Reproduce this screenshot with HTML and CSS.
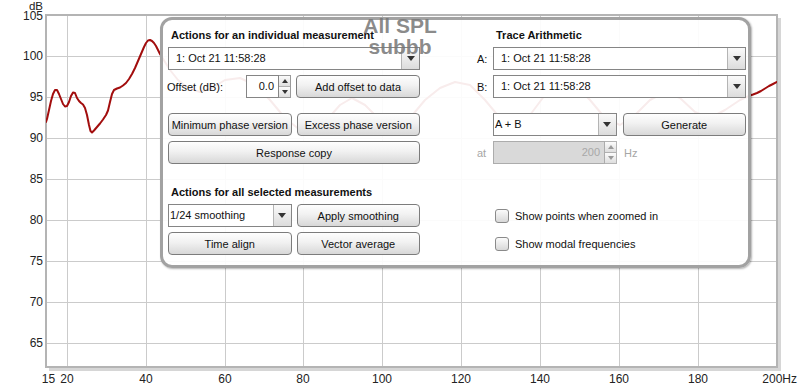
FILE: index.html
```html
<!DOCTYPE html>
<html lang="en">
<head>
    <meta charset="UTF-8">
    <meta name="viewport" content="width=device-width, initial-scale=1.0">
    <link rel="stylesheet" href="styles.css">
    <title>All SPL</title>
</head>
<body>

    <div class="graph">
        <svg class="plot" width="800" height="389" viewBox="0 0 800 389">
            <defs>
                <clipPath id="plot-area">
                    <rect x="46" y="15" width="731" height="352"/>
                </clipPath>
            </defs>

            <!-- shadow + frame -->
            <path d="M779.5 18 V369.5 H49" fill="none" stroke="#d6d6d6" stroke-width="3"/>
            <rect x="46" y="15" width="731" height="352" fill="#fff" stroke="#b4b4b4" stroke-width="2"/>

            <g class="grid">
                <line x1="67" y1="16" x2="67" y2="366"/>
                <line x1="146" y1="16" x2="146" y2="366"/>
                <line x1="225" y1="16" x2="225" y2="366"/>
                <line x1="303" y1="16" x2="303" y2="366"/>
                <line x1="382" y1="16" x2="382" y2="366"/>
                <line x1="461" y1="16" x2="461" y2="366"/>
                <line x1="540" y1="16" x2="540" y2="366"/>
                <line x1="619" y1="16" x2="619" y2="366"/>
                <line x1="698" y1="16" x2="698" y2="366"/>
                <line x1="47" y1="56" x2="776" y2="56"/>
                <line x1="47" y1="97" x2="776" y2="97"/>
                <line x1="47" y1="138" x2="776" y2="138"/>
                <line x1="47" y1="179" x2="776" y2="179"/>
                <line x1="47" y1="220" x2="776" y2="220"/>
                <line x1="47" y1="261" x2="776" y2="261"/>
                <line x1="47" y1="302" x2="776" y2="302"/>
                <line x1="47" y1="343" x2="776" y2="343"/>
            </g>

            <path class="trace" clip-path="url(#plot-area)" d="M46 122 L47 119 L49 110 L51 101 L53 94 L55 90 L57 90 L59 94 L61 99 L63 104 L65 106.5 L67 106 L69 102 L71 96 L73 92.5 L75 93 L77 98 L79 101 L81 103 L83 104.5 L85 108 L87 115 L89 125 L90.5 131 L92 132.5 L94 130.5 L97 127 L100 123.5 L103 119.5 L106 115 L108 110.5 L110 102 L112 94 L114 90 L117 88.5 L120 87.5 L123 85.5 L126 83 L129 79 L132 74 L135 68 L138 61 L141 54 L144 47 L146 43 L148 40.5 L150 40 L152 41 L154 43 L156 46 L158 50 L160 54 L165 62 L170 70 L178 80 L188 88 L200 92 L212 88 L225 80 L240 78 L255 85 L270 100 L285 118 L300 130 L312 132 L325 122 L340 105 L352 98 L365 105 L380 120 L395 128 L410 118 L425 100 L440 88 L455 82 L470 85 L485 100 L500 118 L515 125 L530 115 L545 95 L560 82 L575 85 L590 100 L605 118 L620 125 L635 115 L650 100 L665 92 L680 98 L695 112 L710 118 L725 110 L740 100 L750 95.5 L753 94.5 L757 93 L761 91 L765 88.5 L769 86 L773 84 L777 82 L780 81"/>

            <g class="axis-y">
                <text x="43" y="10" class="axis-unit">dB</text>
                <text x="43" y="20">105</text>
                <text x="43" y="60">100</text>
                <text x="43" y="101">95</text>
                <text x="43" y="142">90</text>
                <text x="43" y="183">85</text>
                <text x="43" y="224">80</text>
                <text x="43" y="265">75</text>
                <text x="43" y="306">70</text>
                <text x="43" y="347">65</text>
            </g>
            <g class="axis-x">
                <text x="48.5" y="383">15</text>
                <text x="67" y="383">20</text>
                <text x="146" y="383">40</text>
                <text x="225" y="383">60</text>
                <text x="303" y="383">80</text>
                <text x="382" y="383">100</text>
                <text x="461" y="383">120</text>
                <text x="540" y="383">140</text>
                <text x="619" y="383">160</text>
                <text x="698" y="383">180</text>
                <text x="797" y="383" class="axis-end">200Hz</text>
            </g>
        </svg>

        <div class="panel">
            <div class="panel-col panel-left">
                <div class="section-title">Actions for an individual measurement</div>
                <div class="combo">
                    <span class="combo-text">1: Oct 21 11:58:28</span>
                    <span class="combo-arrow"></span>
                </div>
                <div class="offset-row gap-big">
                    <span class="offset-label">Offset (dB):</span>
                    <div class="spinner offset-spinner">
                        <span class="spinner-value">0.0</span>
                        <span class="spinner-arrows">
                            <span class="spin spin-up"></span>
                            <span class="spin spin-down"></span>
                        </span>
                    </div>
                    <button class="btn">Add offset to data</button>
                </div>
                <div class="pair">
                    <button class="btn">Minimum phase version</button>
                    <button class="btn">Excess phase version</button>
                </div>
                <button class="btn btn-wide">Response copy</button>

                <div class="section-title section-title-lower">Actions for all selected measurements</div>
                <div class="pair">
                    <div class="combo combo-edit">
                        <span class="combo-text">1/24 smoothing</span>
                        <span class="combo-arrow"></span>
                    </div>
                    <button class="btn">Apply smoothing</button>
                </div>
                <div class="pair">
                    <button class="btn">Time align</button>
                    <button class="btn">Vector average</button>
                </div>
            </div>

            <div class="panel-col panel-right">
                <div class="section-title trace-title">Trace Arithmetic</div>
                <div class="labelled">
                    <span class="row-label">A:</span>
                    <div class="combo">
                        <span class="combo-text">1: Oct 21 11:58:28</span>
                        <span class="combo-arrow"></span>
                    </div>
                </div>
                <div class="labelled gap-big">
                    <span class="row-label">B:</span>
                    <div class="combo">
                        <span class="combo-text">1: Oct 21 11:58:28</span>
                        <span class="combo-arrow"></span>
                    </div>
                </div>
                <div class="labelled">
                    <span class="row-label"></span>
                    <div class="pair pair-wide">
                        <div class="combo combo-edit">
                            <span class="combo-text">A + B</span>
                            <span class="combo-arrow"></span>
                        </div>
                        <button class="btn">Generate</button>
                    </div>
                </div>
                <div class="labelled at-row">
                    <span class="row-label disabled">at</span>
                    <div class="spinner spinner-disabled">
                        <span class="spinner-value">200</span>
                        <span class="spinner-arrows">
                            <span class="spin spin-up"></span>
                            <span class="spin spin-down"></span>
                        </span>
                    </div>
                    <span class="unit disabled">Hz</span>
                </div>

                <label class="check check-first">
                    <span class="check-box"></span>
                    Show points when zoomed in
                </label>
                <label class="check">
                    <span class="check-box"></span>
                    Show modal frequencies
                </label>
            </div>
        </div>

        <div class="graph-title">All SPL<br>subbb</div>
    </div>

</body>
</html>
```

FILE: styles.css
```css
* {
    margin: 0;
    padding: 0;
    box-sizing: border-box;
}

body {
    width: 800px;
    height: 389px;
    overflow: hidden;
    background-color: #fff;
    font-family: "Liberation Sans", Arial, sans-serif;
    font-size: 11px;
    color: #111;
}

.graph {
    position: relative;
    width: 800px;
    height: 389px;
}
.plot {
    display: block;
}
.grid line {
    stroke: #cbcbcb;
    stroke-width: 1;
    shape-rendering: crispEdges;
}
.trace {
    fill: none;
    stroke: #a20d0d;
    stroke-width: 2;
    stroke-linejoin: round;
    stroke-linecap: round;
}
.axis-y text, .axis-x text {
    font-family: "Liberation Sans", Arial, sans-serif;
    font-size: 12px;
    fill: #222;
}
.axis-y text {
    text-anchor: end;
}
.axis-y .axis-unit {
    font-size: 11.5px;
}
.axis-x text {
    text-anchor: middle;
}
.axis-x .axis-end {
    text-anchor: end;
}

.graph-title {
    position: absolute;
    left: 340px;
    top: 15px;
    width: 120px;
    text-align: center;
    font-size: 21px;
    line-height: 21px;
    font-weight: bold;
    color: rgba(118, 118, 118, 0.85);
}

/* floating control panel */
.panel {
    position: absolute;
    left: 160px;
    top: 17px;
    width: 591px;
    height: 251px;
    display: flex;
    gap: 57px;
    padding: 8px 2px 0 5px;
    border: 3px solid #a2a2a2;
    border-radius: 12px;
    background-color: rgba(255, 255, 255, 0.92);
    box-shadow: 1px 1px 2px rgba(0, 0, 0, 0.3);
}
.panel-col {
    display: flex;
    flex-direction: column;
}
.panel-left {
    width: 252px;
}
.panel-right {
    flex: 1;
}

.section-title {
    height: 14px;
    line-height: 14px;
    margin-bottom: 5px;
    padding-left: 3px;
    font-weight: bold;
    white-space: nowrap;
}
.section-title-lower {
    margin-top: 16px;
}
.trace-title {
    padding-left: 19px;
}

.pair, .offset-row, .labelled, .btn-wide, .panel-left > .combo {
    margin-bottom: 5px;
}
.pair {
    display: grid;
    grid-template-columns: 1fr 1fr;
    gap: 5px;
}
.pair-wide {
    flex: 1;
    gap: 6px;
    margin-bottom: 0;
}
.offset-row.gap-big, .labelled.gap-big {
    margin-bottom: 15px;
}

.btn {
    height: 23px;
    border: 1px solid #7c7c7c;
    border-radius: 4px;
    background: linear-gradient(#fefefe, #f1f1f1 45%, #d8d8d8);
    font-family: inherit;
    font-size: 11px;
    color: #111;
    text-align: center;
    white-space: nowrap;
}
.btn-wide {
    width: 100%;
}

.combo {
    display: flex;
    height: 23px;
    border: 1px solid #858585;
    background-color: #fff;
}
.combo-text {
    flex: 1;
    padding-left: 7px;
    line-height: 21px;
    white-space: nowrap;
}
.combo-edit .combo-text {
    padding-left: 1px;
}
.combo-arrow {
    width: 18px;
    display: flex;
    align-items: center;
    justify-content: center;
    border-left: 1px solid #b4b4b4;
    background: linear-gradient(#fafafa, #dcdcdc);
}
.combo-arrow::after {
    content: "";
    border-left: 4px solid transparent;
    border-right: 4px solid transparent;
    border-top: 5px solid #333;
}

.offset-row {
    display: flex;
    height: 23px;
    align-items: center;
}
.offset-label {
    width: 78px;
    margin-left: -1px;
    margin-right: 1px;
}
.offset-row .btn {
    flex: 1;
    margin-left: 5px;
}

.spinner {
    display: flex;
    height: 23px;
}
.offset-spinner {
    width: 45px;
}
.spinner-value {
    flex: 1;
    border: 1px solid #858585;
    background-color: #fff;
    text-align: right;
    padding-right: 4px;
    line-height: 21px;
}
.spinner-arrows {
    width: 12px;
    display: flex;
    flex-direction: column;
    border: 1px solid #9a9a9a;
    border-left: none;
}
.spin {
    flex: 1;
    display: flex;
    align-items: center;
    justify-content: center;
    background: linear-gradient(#fbfbfb, #dedede);
}
.spin-up {
    border-bottom: 1px solid #b0b0b0;
}
.spin-up::after {
    content: "";
    border-left: 3px solid transparent;
    border-right: 3px solid transparent;
    border-bottom: 4px solid #333;
}
.spin-down::after {
    content: "";
    border-left: 3px solid transparent;
    border-right: 3px solid transparent;
    border-top: 4px solid #333;
}

.labelled {
    display: flex;
    align-items: center;
    height: 23px;
}
.labelled .combo {
    flex: 1;
}
.row-label {
    width: 16px;
}
.at-row .spinner {
    width: 124px;
}
.spinner-disabled .spinner-value {
    background-color: #d9d9d9;
    border-color: #acacac;
    color: #a8a8a8;
}
.spinner-disabled .spinner-arrows {
    border-color: #b4b4b4;
}
.spinner-disabled .spin::after {
    border-top-color: #999;
    border-bottom-color: #999;
}
.unit {
    margin-left: 7px;
}
.disabled {
    color: #a6a6a6;
}

.check {
    display: flex;
    align-items: center;
    gap: 6px;
    height: 23px;
    padding-left: 18px;
    margin-bottom: 5px;
    white-space: nowrap;
}
.check-first {
    margin-top: 35px;
}
.check-box {
    width: 14px;
    height: 14px;
    border: 1px solid #8a8a8a;
    border-radius: 3px;
    background: linear-gradient(#fbfbfb, #d8d8d8);
}
```
